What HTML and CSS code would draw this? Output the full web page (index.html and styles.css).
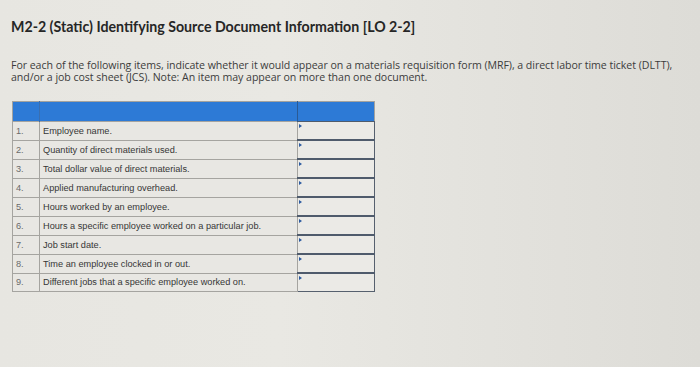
FILE: index.html
```html
<!DOCTYPE html>
<html>
<head>
<meta charset="utf-8">
<link rel="stylesheet" href="styles.css">
</head>
<body>
<div class="page">
  <h1 class="title">M2-2 (Static) Identifying Source Document Information [LO 2-2]</h1>
  <p class="intro">For each of the following items, indicate whether it would appear on a materials requisition form (MRF), a direct labor time ticket (DLTT), and/or a job cost sheet (JCS). Note: An item may appear on more than one document.</p>
  <table class="grid">
    <colgroup><col class="c-num"><col class="c-item"><col class="c-ans"></colgroup>
    <thead>
      <tr><th></th><th></th><th class="h-ans"></th></tr>
    </thead>
    <tbody>
      <tr><td class="num">1.</td><td class="item">Employee name.</td><td class="ans"><span class="box"></span></td></tr>
      <tr><td class="num">2.</td><td class="item">Quantity of direct materials used.</td><td class="ans"><span class="box"></span></td></tr>
      <tr><td class="num">3.</td><td class="item">Total dollar value of direct materials.</td><td class="ans"><span class="box"></span></td></tr>
      <tr><td class="num">4.</td><td class="item">Applied manufacturing overhead.</td><td class="ans"><span class="box"></span></td></tr>
      <tr><td class="num">5.</td><td class="item">Hours worked by an employee.</td><td class="ans"><span class="box"></span></td></tr>
      <tr><td class="num">6.</td><td class="item">Hours a specific employee worked on a particular job.</td><td class="ans"><span class="box"></span></td></tr>
      <tr><td class="num">7.</td><td class="item">Job start date.</td><td class="ans"><span class="box"></span></td></tr>
      <tr><td class="num">8.</td><td class="item">Time an employee clocked in or out.</td><td class="ans"><span class="box"></span></td></tr>
      <tr><td class="num">9.</td><td class="item">Different jobs that a specific employee worked on.</td><td class="ans"><span class="box"></span></td></tr>
    </tbody>
  </table>
</div>
</body>
</html>
```
FILE: styles.css
```css
html, body {
  margin: 0;
  padding: 0;
}
body {
  width: 700px;
  height: 367px;
  overflow: hidden;
  background: linear-gradient(90deg, #e7e6e1 0%, #e9e8e3 40%, #e2e1dc 75%, #dddcd7 100%);
  font-family: Lato, "Open Sans", sans-serif;
}
.page {
  padding: 18px 0 0 11px;
}
.title {
  margin: 0;
  font-size: 14.2px;
  line-height: 18px;
  font-weight: 700;
  color: #262626;
}
.intro {
  margin: 23px 0 0 0;
  width: 684px;
  font-family: "Open Sans", Lato, sans-serif;
  font-size: 10.6px;
  line-height: 12px;
  letter-spacing: -0.05px;
  color: #3c3c3c;
}
.grid {
  margin: 18px 0 0 1px;
  border-collapse: collapse;
  table-layout: fixed;
  width: 362px;
  font-family: "Liberation Sans", Arial, sans-serif;
  border: 1px solid #a3a29e;
}
.c-num { width: 27px; }
.c-item { width: 258px; }
.c-ans { width: 77px; }
.grid th {
  height: 19px;
  padding: 0;
  background: #2d7ad6;
  border-left: 1px solid #3a6fb0;
}
.grid th:first-child { border-left: none; }
.grid th.h-ans { border-left: 1px solid #2b5a94; }
.grid td {
  height: 17px;
  padding: 0;
  background: #e8e7e3;
  border: 1px solid #a5a4a0;
  font-size: 9.2px;
  color: #4a4a4a;
}
.grid td.num {
  padding-left: 3px;
  color: #6a6a6a;
}
.grid td.item {
  padding-left: 3px;
  color: #363636;
}
.grid td.ans {
  position: relative;
  border: 1px solid #56606e;
  border-top: 2px solid #4f5b6c;
  background: #ebeae6;
}
.grid tbody tr:first-child td.ans {
  border-top: 1px solid #4f5b6c;
}
.box {
  position: absolute;
  left: 1px;
  top: 2px;
  width: 0;
  height: 0;
  border-top: 2px solid transparent;
  border-bottom: 2px solid transparent;
  border-left: 3px solid #2b5aa0;
}
```
